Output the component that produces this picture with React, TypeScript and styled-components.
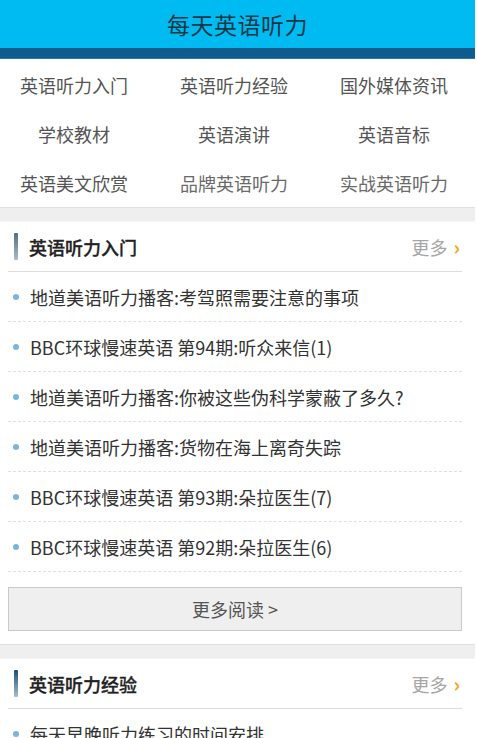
import * as React from 'react'
import styled, { createGlobalStyle } from 'styled-components'

const GlobalStyle = createGlobalStyle`
  html, body {
    margin: 0;
    padding: 0;
    background: #ffffff;
  }
  body {
    font-family: "Noto Sans CJK SC", "Noto Sans", sans-serif;
  }
`

interface Section {
  title: string
  barTop: string
  items: string[]
  showMore: boolean
}

const NAV_ITEMS = [
  '英语听力入门',
  '英语听力经验',
  '国外媒体资讯',
  '学校教材',
  '英语演讲',
  '英语音标',
  '英语美文欣赏',
  '品牌英语听力',
  '实战英语听力',
]

const SECTIONS: Section[] = [
  {
    title: '英语听力入门',
    barTop: '#4f6f86',
    items: [
      '地道美语听力播客:考驾照需要注意的事项',
      'BBC环球慢速英语 第94期:听众来信(1)',
      '地道美语听力播客:你被这些伪科学蒙蔽了多久?',
      '地道美语听力播客:货物在海上离奇失踪',
      'BBC环球慢速英语 第93期:朵拉医生(7)',
      'BBC环球慢速英语 第92期:朵拉医生(6)',
    ],
    showMore: true,
  },
  {
    title: '英语听力经验',
    barTop: '#1b4f78',
    items: ['每天早晚听力练习的时间安排'],
    showMore: false,
  },
]

export default function App(): JSX.Element {
  return (
    <Page>
      <GlobalStyle />
      <Header>
        <HeaderTitle>每天英语听力</HeaderTitle>
      </Header>
      <HeaderStripe />
      <NavGrid>
        {NAV_ITEMS.map((name, i) => (
          <NavItem key={name} faded={i >= 7}>
            {name}
          </NavItem>
        ))}
      </NavGrid>
      {SECTIONS.map((section) => (
        <React.Fragment key={section.title}>
          <Divider />
          <SectionBlock>
            <SectionHead>
              <SectionTitle>
                <TitleBar barTop={section.barTop} />
                {section.title}
              </SectionTitle>
              <MoreLink>
                更多
                <MoreArrow>›</MoreArrow>
              </MoreLink>
            </SectionHead>
            <ArticleList>
              {section.items.map((item) => (
                <ArticleRow key={item}>
                  <Bullet />
                  {item}
                </ArticleRow>
              ))}
            </ArticleList>
            {section.showMore ? <ReadMoreButton>更多阅读 &gt;</ReadMoreButton> : null}
          </SectionBlock>
        </React.Fragment>
      ))}
    </Page>
  )
}

const Page = styled.div`
  width: 475px;
  height: 738px;
  overflow: hidden;
  background: #fff;
`

const Header = styled.div`
  height: 48px;
  background: #00baf2;
  display: flex;
  align-items: center;
  justify-content: center;
`

const HeaderTitle = styled.h1`
  margin: 0;
  font-size: 23px;
  font-weight: normal;
  color: #173746;
  letter-spacing: 0.5px;
`

const HeaderStripe = styled.div`
  height: 10px;
  background: #0e5b8e;
  border-bottom: 1px solid #2a78a8;
`

const NavGrid = styled.div`
  display: grid;
  grid-template-columns: repeat(3, 160px);
  grid-auto-rows: 49px;
  margin-left: -6px;
  padding-top: 1px;
`

const NavItem = styled.div<{ faded: boolean }>`
  display: flex;
  align-items: center;
  justify-content: center;
  font-size: 18px;
  color: ${(p) => (p.faded ? '#6a6a6a' : '#555')};
`

const Divider = styled.div`
  height: 13px;
  background: #efefef;
  border-top: 1px solid #e0e0e0;
  border-bottom: 1px solid #f5f5f5;
`

const SectionBlock = styled.div`
  padding: 0 13px 0 8px;
`

const SectionHead = styled.div`
  height: 49px;
  display: flex;
  align-items: center;
  justify-content: space-between;
  border-bottom: 1px solid #dcdcdc;
`

const SectionTitle = styled.div`
  display: flex;
  align-items: center;
  font-size: 18px;
  font-weight: 500;
  color: #222;
  -webkit-text-stroke: 0.3px #222;
`

const TitleBar = styled.span<{ barTop: string }>`
  display: block;
  width: 4px;
  height: 27px;
  margin: 0 11px 0 6px;
  border-radius: 1px;
  background: linear-gradient(${(p) => p.barTop}, #a9bccb);
`

const MoreLink = styled.div`
  display: flex;
  align-items: center;
  font-size: 18px;
  color: #a6a6a6;
  padding-right: 2px;
`

const MoreArrow = styled.span`
  margin-left: 6px;
  font-size: 20px;
  font-weight: bold;
  color: #f0a818;
  line-height: 1;
`

const ArticleList = styled.ul`
  list-style: none;
  margin: 0;
  padding: 0;
`

const ArticleRow = styled.li`
  height: 49px;
  display: flex;
  align-items: center;
  font-size: 18px;
  color: #333;
  border-bottom: 1px dashed #e0e0e0;
`

const Bullet = styled.span`
  width: 6px;
  height: 6px;
  border-radius: 50%;
  background: #7eb3da;
  margin: 0 11px 0 5px;
  flex-shrink: 0;
`

const ReadMoreButton = styled.div`
  margin: 15px 0 13px;
  height: 42px;
  display: flex;
  align-items: center;
  justify-content: center;
  background: #efefef;
  border: 1px solid #c9c9c9;
  font-size: 18px;
  color: #555;
`
